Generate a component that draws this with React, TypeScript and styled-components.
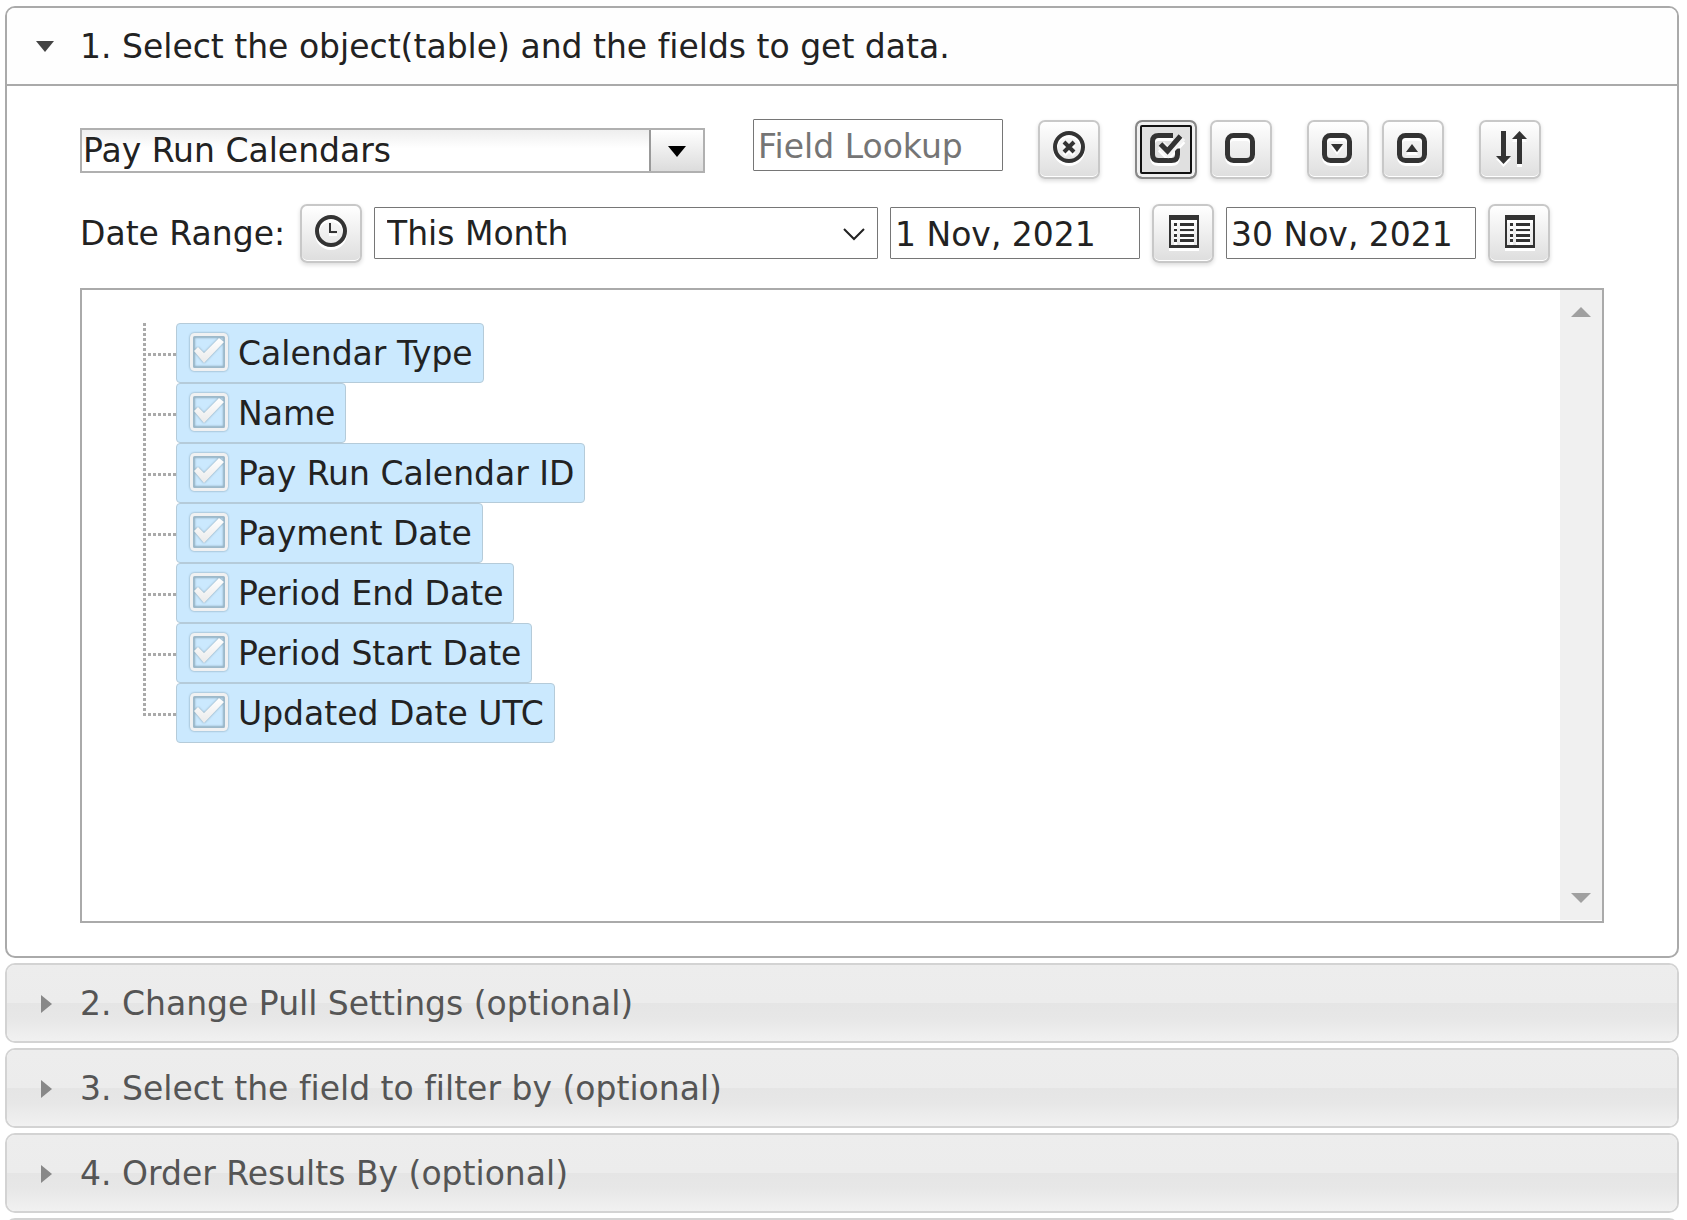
import React, { useState } from "react";
import styled, { createGlobalStyle, css } from "styled-components";

const GlobalStyle = createGlobalStyle`
  * { box-sizing: border-box; }
  body {
    margin: 0;
    background: #fff;
    color: #222;
    font-family: Verdana, "DejaVu Sans", sans-serif;
    font-size: 33px;
    line-height: 40px;
    font-variant-ligatures: none;
  }
  button, input, select { font: inherit; font-variant-ligatures: none; color: inherit; margin: 0; }
`;

const Accordion = styled.main`
  display: flex;
  flex-direction: column;
  gap: 5px;
  padding: 6px 8px 6px 5px;
`;

const Section = styled.section<{ $open?: boolean }>`
  border: 2px solid ${(p) => (p.$open ? "#aaa" : "#d3d3d3")};
  border-radius: 10px;
  overflow: hidden;
`;

const Heading = styled.h3`
  margin: 0;
  font-size: 33px;
  font-weight: 400;
`;

const Header = styled.button<{ $open?: boolean }>`
  display: flex;
  align-items: center;
  width: 100%;
  height: ${(p) => (p.$open ? "78px" : "76px")};
  padding: 2px 28px 0;
  border: 0;
  text-align: left;
  color: ${(p) => (p.$open ? "#222" : "#555")};
  background: linear-gradient(#ededed 0, #ececec 50%, #e5e5e5 50%, #e7e7e7 70%, #f1f1f1 100%);
  ${(p) =>
    p.$open &&
    css`
      border-bottom: 2px solid #aaa;
      background: #fefefe;
    `}
`;

const Marker = styled.svg`
  flex: none;
  width: 20px;
  height: 20px;
  margin-right: 25px;
`;

const Body = styled.div`
  padding: 33px 73px 33px;
`;

const Toolbar = styled.div`
  display: flex;
  align-items: flex-start;
  gap: 35px;
  height: 84px;
`;

const RangeBar = styled.div`
  display: flex;
  align-items: flex-start;
  gap: 12px;
  height: 85px;
`;

const Group = styled.div`
  display: flex;
  gap: 13px;
`;

const Combo = styled.div`
  display: flex;
  width: 625px;
  height: 45px;
  margin: 9px 13px 0 0;
  border: 2px solid #b0b0b0;
  background: linear-gradient(#eee, #fff 45%);
`;

const ComboInput = styled.input`
  flex: 1;
  min-width: 0;
  padding: 0 1px;
  border: 0;
  outline: 0;
  background: transparent;
`;

const ComboToggle = styled.button`
  display: grid;
  place-items: center;
  width: 54px;
  padding: 0;
  border: 0;
  border-left: 2px solid #999;
  background: linear-gradient(#fff, #dcdcdc);
`;

const TextField = styled.input`
  width: 250px;
  height: 52px;
  padding: 3px 4px 1px;
  border: 1px solid #767676;
  border-radius: 1px;
  background: #fff;
  &::placeholder { color: #757575; opacity: 1; }
`;

const SelectWrap = styled.div`
  position: relative;
  width: 504px;
  margin-top: 4px;
`;

const SelectBox = styled.select`
  display: block;
  appearance: none;
  width: 100%;
  height: 52px;
  padding: 2px 50px 0 12px;
  border: 1px solid #767676;
  border-radius: 1px;
  background: #fff;
`;

const Chevron = styled.svg`
  position: absolute;
  right: 12px;
  top: 20px;
  width: 24px;
  height: 14px;
  pointer-events: none;
`;

const RangeLabel = styled.span`
  width: 208px;
  padding-top: 11px;
  white-space: nowrap;
`;

const DateField = styled(TextField)`
  margin-top: 4px;
`;

const IconButton = styled.button<{ $focused?: boolean }>`
  display: grid;
  place-items: center;
  flex: none;
  width: 62px;
  height: 59px;
  padding: 0 0 3px;
  border: 2px solid #c8c8c8;
  border-radius: 7px;
  background: linear-gradient(#fff, #dedede);
  box-shadow: inset 0 -1px 0 #fff, 0 2px 4px rgba(0, 0, 0, 0.14);
  margin-top: 1px;
  ${(p) =>
    p.$focused &&
    css`
      border-color: #888;
      background: #e0e0e0;
      box-shadow: inset 0 0 0 3px #f0f0f0, inset 0 0 0 5px #111, 0 2px 4px rgba(0, 0, 0, 0.14);
    `}
`;

const Glyph = styled.svg`
  width: 34px;
  height: 36px;
  color: #333;
  overflow: visible;
  filter: drop-shadow(0 3px 0 #fff);
`;

const TreeBox = styled.div`
  display: flex;
  height: 635px;
  border: 2px solid #aaa;
`;

const Tree = styled.ul`
  flex: 1;
  margin: 0;
  padding: 33px 0 0 61px;
  list-style: none;
`;

const Node = styled.li`
  display: flex;
  height: 60px;
  padding-left: 33px;
  background:
    repeating-linear-gradient(90deg, #aaa 0 3px, transparent 3px 5px) 0 30px / 33px 3px no-repeat,
    repeating-linear-gradient(#aaa 0 3px, transparent 3px 5px) 0 0 / 3px 100% no-repeat;
  &:last-child {
    background:
      repeating-linear-gradient(90deg, #aaa 0 3px, transparent 3px 5px) 0 30px / 33px 3px no-repeat,
      repeating-linear-gradient(#aaa 0 3px, transparent 3px 5px) 0 0 / 3px 33px no-repeat;
  }
`;

const NodeLabel = styled.label`
  display: flex;
  align-items: center;
  height: 60px;
  padding: 1px 10px 0 11px;
  border: 1px solid #b5cbd9;
  border-radius: 4px;
  background: #cbe9fe;
  white-space: nowrap;
`;

const Tick = styled.span`
  display: grid;
  width: 42px;
  height: 42px;
  margin: 0 8px 4px 0;
  & > * { grid-area: 1 / 1; width: 42px; height: 42px; margin: 0; }
  input { appearance: none; }
  svg {
    pointer-events: none;
    overflow: visible;
    filter: drop-shadow(0 0 1px #7f9cae);
  }
`;

const ScrollTrack = styled.div`
  display: flex;
  flex-direction: column;
  justify-content: space-between;
  width: 42px;
  margin-bottom: 1px;
  background: #f0f0f0;
`;

const ScrollButton = styled.button`
  display: grid;
  place-items: center;
  height: 44px;
  padding: 0;
  border: 0;
  background: transparent;
`;

const LookupIcon = () => (
  <Glyph viewBox="0 0 34 36" fill="none" stroke="currentColor">
    <circle cx="17" cy="17" r="14" strokeWidth="4" />
    <path d="M12 12l10 10M22 12l-10 10" strokeWidth="4" />
  </Glyph>
);

const CheckAllIcon = () => (
  <Glyph viewBox="0 0 34 36" fill="none" stroke="currentColor">
    <path d="M24 5.500H9.500Q3.500 5.500 3.500 11.500v13q0 6 6 6h13q6 0 6-6v-6" strokeWidth="5" />
    <path d="M12 15l7 7L33 7" stroke="#f4f4f4" strokeWidth="9" />
    <path d="M11.500 14l7 7L31.500 6" strokeWidth="5" />
  </Glyph>
);

const BoxIcon = ({ mark }: { mark?: string }) => (
  <Glyph viewBox="0 0 34 36" fill="none" stroke="currentColor">
    <rect x="3.500" y="5.500" width="25" height="25" rx="6" strokeWidth="5" />
    {mark && <path d={mark} fill="currentColor" stroke="none" />}
  </Glyph>
);

const SortIcon = () => (
  <Glyph viewBox="0 0 34 36" fill="currentColor">
    <path d="M8 1h5v25h5l-7.500 8-7.500-8h5zM24 34h5V9h5l-7.500-8-7.500 8h5z" />
  </Glyph>
);

const ListIcon = () => (
  <Glyph viewBox="0 0 34 36" fill="currentColor">
    <path fillRule="evenodd" d="M3 1h30v33H3zM5 6v25h26V6z" />
    <path d="M8 9h3v3H8zM14 9h14v3H14zM8 15h3v2H8zM14 15h14v2H14zM8 20h3v3H8zM14 20h14v3H14zM8 25h3v3H8zM14 25h14v3H14z" />
  </Glyph>
);

const ClockIcon = () => (
  <Glyph viewBox="0 0 34 36" fill="none" stroke="currentColor">
    <circle cx="17" cy="17" r="14" strokeWidth="4" />
    <path d="M16 9v9h7" strokeWidth="2" />
  </Glyph>
);

const TickDrawing = () => (
  <svg viewBox="0 0 42 42" aria-hidden="true">
    <defs>
      <linearGradient id="tickFill" x1="0" y1="0" x2="0" y2="1">
        <stop offset="0" stopColor="#fff" />
        <stop offset="1" stopColor="#eaeaea" />
      </linearGradient>
    </defs>
    <rect x="5.500" y="5.500" width="31" height="31" fill="none" stroke="#9db9ca" strokeWidth="2" />
    <rect x="3.500" y="3.500" width="35" height="35" rx="3" fill="none" stroke="#f0f1f2" strokeWidth="3" />
    <path d="M6 20l4-4 6 6L31 7l5 4-20 21z" fill="url(#tickFill)" />
  </svg>
);

const FIELDS = [
  "Calendar Type",
  "Name",
  "Pay Run Calendar ID",
  "Payment Date",
  "Period End Date",
  "Period Start Date",
  "Updated Date UTC",
];

const FieldNode = ({ name }: { name: string }) => {
  const [checked, setChecked] = useState(true);
  return (
    <Node>
      <NodeLabel>
        <Tick>
          <input type="checkbox" checked={checked} onChange={() => setChecked(!checked)} />
          {checked && <TickDrawing />}
        </Tick>
        {name}
      </NodeLabel>
    </Node>
  );
};

const Collapsed = ({ title }: { title?: string }) => (
  <Section>
    <Heading>
      <Header aria-expanded={false} aria-label={title ?? "Next step"}>
        <Marker viewBox="0 0 20 20"><path d="M6 1l11 9-11 9z" fill="#888" /></Marker>
        {title}
      </Header>
    </Heading>
  </Section>
);

export default function App() {
  return (
    <>
      <GlobalStyle />
      <Accordion>
        <Section $open>
          <Heading>
            <Header $open aria-expanded>
              <Marker viewBox="0 0 20 20"><path d="M1 4h18l-9 11z" fill="#444" /></Marker>
              1. Select the object(table) and the fields to get data.
            </Header>
          </Heading>
          <Body>
            <Toolbar>
              <Combo>
                <ComboInput aria-label="Object" defaultValue="Pay Run Calendars" />
                <ComboToggle aria-label="Show objects">
                  <svg width="18" height="12" viewBox="0 0 18 12"><path d="M0 1h18L9 12z" fill="#000" /></svg>
                </ComboToggle>
              </Combo>
              <TextField aria-label="Field Lookup" placeholder="Field Lookup" />
              <IconButton aria-label="Clear lookup"><LookupIcon /></IconButton>
              <Group>
                <IconButton $focused aria-label="Select all"><CheckAllIcon /></IconButton>
                <IconButton aria-label="Select none"><BoxIcon /></IconButton>
              </Group>
              <Group>
                <IconButton aria-label="Expand all"><BoxIcon mark="M10 14h12l-6 8z" /></IconButton>
                <IconButton aria-label="Collapse all"><BoxIcon mark="M10 22h12l-6-8z" /></IconButton>
              </Group>
              <IconButton aria-label="Sort fields"><SortIcon /></IconButton>
            </Toolbar>
            <RangeBar>
              <RangeLabel>Date Range:</RangeLabel>
              <IconButton aria-label="Date field"><ClockIcon /></IconButton>
              <SelectWrap>
                <SelectBox aria-label="Date Range" defaultValue="This Month">
                  <option>This Month</option>
                </SelectBox>
                <Chevron viewBox="0 0 24 14"><path d="M2 2l10 10L22 2" fill="none" stroke="#222" strokeWidth="2" /></Chevron>
              </SelectWrap>
              <DateField aria-label="From" defaultValue="1 Nov, 2021" />
              <IconButton aria-label="Pick start date"><ListIcon /></IconButton>
              <DateField aria-label="To" defaultValue="30 Nov, 2021" />
              <IconButton aria-label="Pick end date"><ListIcon /></IconButton>
            </RangeBar>
            <TreeBox>
              <Tree>
                {FIELDS.map((f) => <FieldNode key={f} name={f} />)}
              </Tree>
              <ScrollTrack>
                <ScrollButton aria-label="Scroll up">
                  <svg width="20" height="10" viewBox="0 0 20 10"><path d="M0 10L10 0l10 10z" fill="#a0a0a0" /></svg>
                </ScrollButton>
                <ScrollButton aria-label="Scroll down">
                  <svg width="20" height="10" viewBox="0 0 20 10"><path d="M0 0l10 10L20 0z" fill="#a0a0a0" /></svg>
                </ScrollButton>
              </ScrollTrack>
            </TreeBox>
          </Body>
        </Section>
        <Collapsed title="2. Change Pull Settings (optional)" />
        <Collapsed title="3. Select the field to filter by (optional)" />
        <Collapsed title="4. Order Results By (optional)" />
        <Collapsed />
      </Accordion>
    </>
  );
}
